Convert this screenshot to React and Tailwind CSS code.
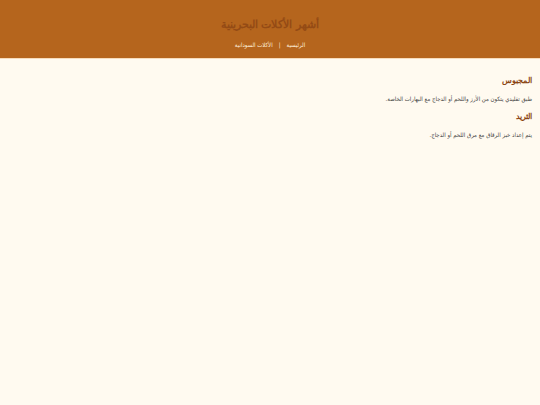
export default function App() {
  return (
    <div dir="rtl" lang="ar" className="min-h-screen bg-[#fffaf0] font-[Arial,'Liberation_Sans',sans-serif] text-[#444444]">
      <header className="border-b border-[#f7dcbc] bg-[#b5651d] px-2 pt-4 pb-2 text-center">
        <h1 className="text-[11px] leading-4 font-bold text-[#944b15]">أشهر الأكلات البحرينية</h1>
        <nav className="mt-2 flex justify-center gap-1.5 font-['DejaVu_Sans_Condensed',sans-serif] text-[6px] leading-[10px] text-[#fff0dc]">
          <a href="#home">الرئيسية</a>
          <span>|</span>
          <a href="#sudanese">الأكلات السودانية</a>
        </nav>
      </header>
      <main className="flex flex-col gap-1.5 px-2 pt-4">
        <section className="flex flex-col gap-1.5">
          <h2 className="text-[8px] leading-3 font-bold text-[#8b4513]">المجبوس</h2>
          <p className="font-['DejaVu_Sans_Condensed',sans-serif] text-[6px] leading-3">طبق تقليدي يتكون من الأرز واللحم أو الدجاج مع البهارات الخاصة.</p>
        </section>
        <section className="flex flex-col gap-1.5">
          <h2 className="text-[8px] leading-3 font-bold text-[#8b4513]">الثريد</h2>
          <p className="font-['DejaVu_Sans_Condensed',sans-serif] text-[6px] leading-3">يتم إعداد خبز الرقاق مع مرق اللحم أو الدجاج.</p>
        </section>
      </main>
    </div>
  );
}
